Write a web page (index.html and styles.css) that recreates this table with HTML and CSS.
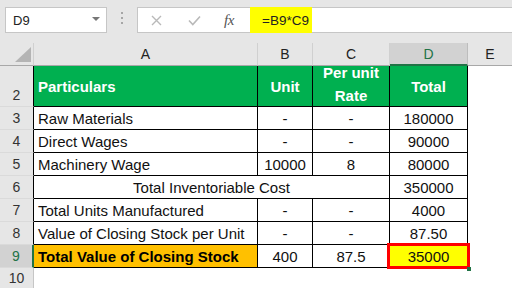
FILE: index.html
```html
<!DOCTYPE html>
<html>
<head>
<meta charset="utf-8">
<link rel="stylesheet" href="styles.css">
</head>
<body>
<div class="app">
  <div class="fbar">
    <div class="namebox"><span class="ref">D9</span><span class="caret"></span></div>
    <div class="dots"><i></i><i></i><i></i></div>
    <div class="formula">
      <div class="ficons">
        <svg class="ic-x" width="11" height="11" viewBox="0 0 11 11"><path d="M1 1L10 10M10 1L1 10" stroke="#b9b9b9" stroke-width="1.4" fill="none"/></svg>
        <svg class="ic-ok" width="13" height="11" viewBox="0 0 13 11"><path d="M1 5.5L4.8 9.5L12 1.5" stroke="#b9b9b9" stroke-width="1.6" fill="none"/></svg>
        <span class="fx">fx</span>
      </div>
      <div class="fvalue">=B9*C9</div>
    </div>
  </div>
  <div class="sheet">
    <div class="corner"><span class="tri"></span></div>
    <div class="hd">A</div>
    <div class="hd">B</div>
    <div class="hd">C</div>
    <div class="hd sel">D</div>
    <div class="hd last">E</div>

    <div class="rh tb">2</div>
    <div class="t g left">Particulars</div>
    <div class="t g">Unit</div>
    <div class="t g wrap">Per unit<br>Rate</div>
    <div class="t g">Total</div>
    <div class="e"></div>

    <div class="rh tb">3</div>
    <div class="t left">Raw Materials</div>
    <div class="t">-</div>
    <div class="t">-</div>
    <div class="t">180000</div>
    <div class="e"></div>

    <div class="rh tb">4</div>
    <div class="t left">Direct Wages</div>
    <div class="t">-</div>
    <div class="t">-</div>
    <div class="t">90000</div>
    <div class="e"></div>

    <div class="rh tb">5</div>
    <div class="t left">Machinery Wage</div>
    <div class="t">10000</div>
    <div class="t">8</div>
    <div class="t">80000</div>
    <div class="e"></div>

    <div class="rh tb">6</div>
    <div class="t merged">Total Inventoriable Cost</div>
    <div class="t">350000</div>
    <div class="e"></div>

    <div class="rh tb">7</div>
    <div class="t left">Total Units Manufactured</div>
    <div class="t">-</div>
    <div class="t">-</div>
    <div class="t">4000</div>
    <div class="e"></div>

    <div class="rh tb">8</div>
    <div class="t left">Value of Closing Stock per Unit</div>
    <div class="t">-</div>
    <div class="t">-</div>
    <div class="t">87.50</div>
    <div class="e"></div>

    <div class="rh tb rsel">9</div>
    <div class="t left o">Total Value of Closing Stock</div>
    <div class="t">400</div>
    <div class="t">87.5</div>
    <div class="t y active">35000<span class="redbox"></span><span class="handle"></span></div>
    <div class="e"></div>

    <div class="rh">10</div>
    <div class="e"></div>
    <div class="e"></div>
    <div class="e"></div>
    <div class="e"></div>
    <div class="e"></div>
  </div>
</div>
</body>
</html>
```

FILE: styles.css
```css
* { box-sizing: border-box; }
html, body { margin: 0; padding: 0; }
body {
  width: 512px;
  height: 288px;
  overflow: hidden;
  background: #e6e6e6;
  font-family: "Liberation Sans", Arial, sans-serif;
}
.app { width: 512px; height: 288px; display: flex; flex-direction: column; }

.fbar {
  height: 43px;
  display: flex;
  align-items: flex-start;
  padding: 7px 0 0 5px;
  flex: none;
}
.namebox {
  width: 102px;
  height: 26px;
  background: #fff;
  border: 1px solid #c6c6c6;
  display: flex;
  align-items: center;
  justify-content: space-between;
  padding: 0 6px 0 7px;
  font-size: 13px;
  color: #222;
}
.caret {
  width: 0; height: 0;
  border-left: 4px solid transparent;
  border-right: 4px solid transparent;
  border-top: 4px solid #777;
  margin-bottom: 3px;
}
.dots {
  width: 4px;
  margin: 5px 0 0 14px;
  display: flex;
  flex-direction: column;
  gap: 3px;
}
.dots i { display: block; width: 2px; height: 2px; background: #a6a6a6; }
.formula {
  margin-left: 12px;
  flex: 1;
  height: 26px;
  background: #fff;
  border: 1px solid #c6c6c6;
  border-right: none;
  display: flex;
}
.ficons {
  width: 112px;
  display: flex;
  align-items: center;
}
.ic-x { margin-left: 13px; }
.ic-ok { margin-left: 26px; }
.fx {
  margin-left: 23px;
  font-family: "Liberation Serif", serif;
  font-style: italic;
  font-size: 15px;
  color: #555;
  letter-spacing: -0.5px;
}
.fvalue {
  width: 62px;
  margin: -1px 0;
  background: #ffff00;
  display: flex;
  align-items: center;
  padding-left: 12px;
  font-size: 13.5px;
  color: #222;
}

.sheet {
  flex: 1;
  display: grid;
  grid-template-columns: 34px 224px 55px 77px 78px 1fr;
  grid-template-rows: 23px 41px repeat(7, 23px) 1fr;
  background: #fff;
}
.corner, .hd {
  background: #e6e6e6;
  border-right: 1px solid #d0d0d0;
  border-bottom: 1px solid #a8a8a8;
}
.corner { position: relative; }
.tri {
  position: absolute;
  right: 2px;
  bottom: 3px;
  width: 0; height: 0;
  border-left: 16px solid transparent;
  border-bottom: 15px solid #b4b4b4;
}
.hd {
  display: flex;
  align-items: center;
  justify-content: center;
  font-size: 14px;
  color: #222;
}
.hd.sel {
  background: #d2d2d2;
  color: #217346;
  border-bottom: 2px solid #217346;
  border-right-color: #bdbdbd;
}
.hd.last { border-right: none; }

.rh {
  background: #e6e6e6;
  border-right: 1px solid #c6c6c6;
  border-bottom: 1px solid #dadada;
  display: flex;
  align-items: flex-end;
  justify-content: center;
  font-size: 14px;
  line-height: 20px;
  color: #333;
  padding-bottom: 1px;
}
.rh.tb { border-right-color: #000; }
.rh.rsel {
  background: #d2d2d2;
  border-right: 2px solid #217346;
  color: #217346;
}

.t {
  border-right: 1px solid #000;
  border-bottom: 1px solid #000;
  display: flex;
  align-items: center;
  justify-content: center;
  font-size: 15px;
  color: #111;
  padding-top: 1px;
  white-space: nowrap;
}
.t.left { justify-content: flex-start; padding-left: 4px; }
.t.merged { grid-column: span 3; }
.t.g {
  background: #00b050;
  color: #fff;
  font-weight: bold;
  padding-top: 0;
}
.t.wrap {
  text-align: center;
  line-height: 23px;
  padding-bottom: 5px;
}
.t.o { background: #ffc000; font-weight: bold; color: #000; }
.t.y { background: #ffff00; }
.active { position: relative; }
.redbox {
  position: absolute;
  left: -3px;
  top: -2px;
  right: -3px;
  bottom: -2px;
  border: 3px solid #ff0000;
}
.handle {
  position: absolute;
  right: -4px;
  bottom: -4px;
  width: 4px;
  height: 4px;
  background: #217346;
}
.e { background: #fff; }
```
